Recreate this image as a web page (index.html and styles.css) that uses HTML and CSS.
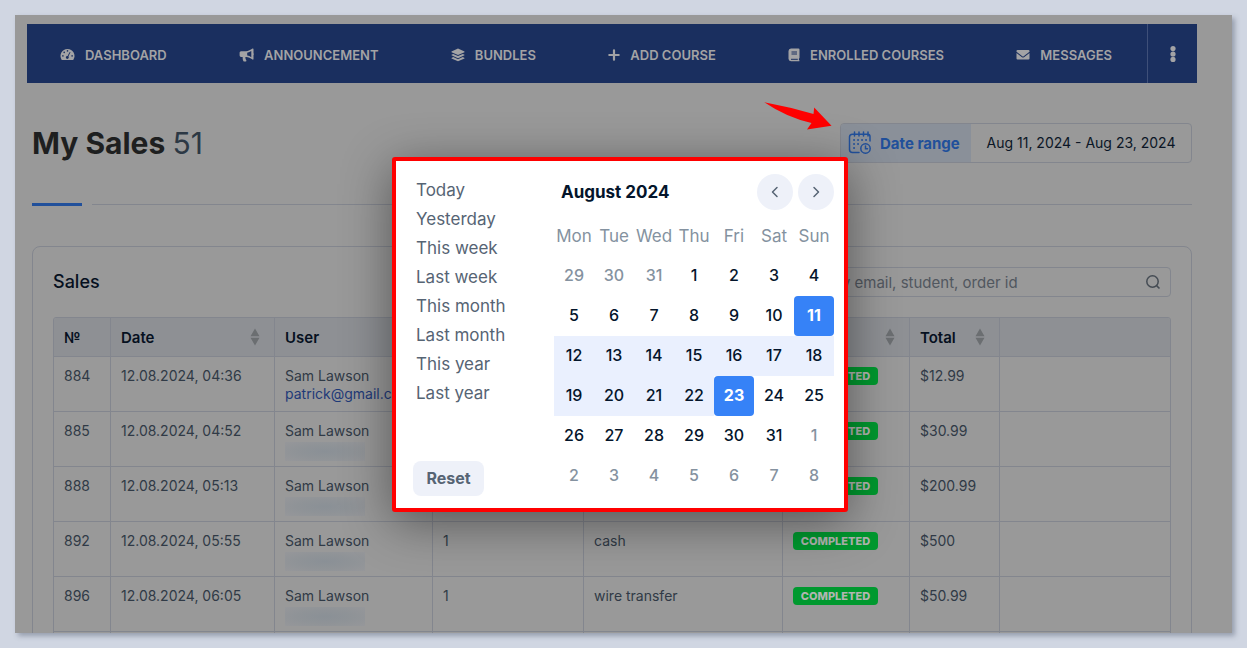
FILE: index.html
```html
<!DOCTYPE html>
<html lang="en">
<head>
<meta charset="utf-8">
<meta name="viewport" content="width=device-width, initial-scale=1">
<title>My Sales</title>
<link rel="stylesheet" href="styles.css">
</head>
<body>
<div class="frame">
  <nav class="nav">
    <div class="nav-links">
      <a href="#"><svg width="15" height="13" viewBox="0 0 15 13"><path fill="currentColor" d="M7.5 1A7 7 0 0 0 1.6 11.7q.3.4.8.4h10.2q.5 0 .8-.4A7 7 0 0 0 7.5 1z"/><g fill="#1a2f5f"><circle cx="7.5" cy="2.9" r=".8"/><circle cx="4.2" cy="4.4" r=".8"/><circle cx="2.9" cy="7.9" r=".8"/><circle cx="12.1" cy="7.9" r=".8"/><circle cx="7.3" cy="9.5" r="1.4"/></g><path d="M7.5 9.2 10 4.2" stroke="#1a2f5f" stroke-width="1"/></svg>Dashboard</a>
      <a href="#"><svg width="15" height="14" viewBox="0 0 15 14"><path fill="currentColor" d="M13.500.6q1-.3 1 .7v3.900q.8.800 0 1.700v4q0 1-1 .7C11.300 9.800 9.600 9.100 7.200 9H6.400c0 1.200.2 2.400.9 3.300q.4.900-.5 1.100H5q-.6 0-.8-.6-.7-1.800-.5-3.800H2Q.7 8.800.6 7.600V4.600Q.7 3.300 2 3.200h5C9.400 3.100 11.400 2.200 13.500.6zm-1.200 2.500Q10.400 4.400 8.200 4.700v2.900q2.300.3 4.100 1.600z"/></svg>Announcement</a>
      <a href="#"><svg width="14" height="14" viewBox="0 0 14 14"><g fill="currentColor"><path d="M7 .6 13.500 3.500v.8L7 7.100.5 4.300v-.8z"/><path d="M2.200 6 7 8.100 11.800 6l1.700.8v.5L7 10.200.5 7.300v-.5z"/><path d="M2.200 9.100 7 11.200l4.800-2.100 1.700.8v.5L7 13.300.5 10.400v-.5z"/></g></svg>Bundles</a>
      <a href="#"><svg width="12" height="12" viewBox="0 0 12 12"><path d="M6 1.300v9.400M1.300 6h9.400" stroke="currentColor" stroke-width="2.200" stroke-linecap="round"/></svg>Add course</a>
      <a href="#"><svg width="12" height="14" viewBox="0 0 12 14"><path fill="currentColor" d="M3 .5h7.500q1 0 1 1v8.300q0 .5-.5.800-.2.700 0 1.400.5.200.5.700t-.7.500H3Q.5 13 .5 10.800V3Q.6.600 3 .5z"/><path d="M3.500 4h5.500M3.500 6h5.500M3 11.300h6.800" stroke="#1a2f5f" stroke-width="1"/></svg>Enrolled courses</a>
      <a href="#"><svg width="14" height="12" viewBox="0 0 14 12"><path fill="currentColor" d="M1.500 1h11q1 0 1 1v.8L7 7.700.5 2.800V2q0-1 1-1z"/><path fill="currentColor" d="M.5 4 6 8.200q1 .7 2 0L13.500 4v5.500q0 1-1 1h-11q-1 0-1-1z"/></svg>Messages</a>
    </div>
    <button class="nav-more" aria-label="More"><svg width="6" height="18" viewBox="0 0 6 18"><g fill="currentColor"><circle cx="3" cy="3.600" r="2.600"/><circle cx="3" cy="9" r="2.600"/><circle cx="3" cy="14.400" r="2.600"/></g></svg></button>
  </nav>

  <main class="content">
    <header class="page-head">
      <h1>My Sales <span>51</span></h1>
      <div class="range">
        <button class="range-field">
          <span class="range-label"><svg width="24" height="24" viewBox="0 0 24 24" fill="none" stroke="currentColor" stroke-width="1.500" stroke-linecap="round"><path d="M22 10V5.500q0-2.300-2.300-2.300H4.500Q1.500 3.200 1.500 6v12.500q0 3 3 3h6.500M6.500 1v4M11 1v4M15.500 1v4M20 1v4"/><circle cx="17.500" cy="17.500" r="4.700"/><path d="M17.500 15v2.800h2"/><path d="M6 9h13M6 13h7M6 17h4" stroke-dasharray=".1 3.900" stroke-width="1.800"/></svg>Date range</span>
          <span class="range-value">Aug 11, 2024 - Aug 23, 2024</span>
        </button>
        <svg class="arrow" width="68" height="29" viewBox="0 0 68 29"><path fill="#f00" d="M.3.200Q26 5 49.500 12L50.200 5.500 67.500 23.700 43 27.500 47.500 21Q22 15 .3.200z"/></svg>

        <section class="picker" aria-label="Choose a date range">
          <div class="presets">
            <ul>
              <li><button>Today</button></li>
              <li><button>Yesterday</button></li>
              <li><button>This week</button></li>
              <li><button>Last week</button></li>
              <li><button>This month</button></li>
              <li><button>Last month</button></li>
              <li><button>This year</button></li>
              <li><button>Last year</button></li>
            </ul>
            <button class="reset">Reset</button>
          </div>
          <div class="calendar">
            <div class="month">
              <strong>August 2024</strong>
              <button aria-label="Previous month"><svg width="16" height="16" viewBox="0 0 16 16"><path d="M10 3.500 5.500 8 10 12.500"/></svg></button>
              <button aria-label="Next month"><svg width="16" height="16" viewBox="0 0 16 16"><path d="M6 3.500 10.500 8 6 12.500"/></svg></button>
            </div>
            <div class="weekdays"><span>Mon</span><span>Tue</span><span>Wed</span><span>Thu</span><span>Fri</span><span>Sat</span><span>Sun</span></div>
            <div class="days">
              <button class="out">29</button><button class="out">30</button><button class="out">31</button><button>1</button><button>2</button><button>3</button><button>4</button>
              <button>5</button><button>6</button><button>7</button><button>8</button><button>9</button><button>10</button><button class="end">11</button>
              <button class="in">12</button><button class="in">13</button><button class="in">14</button><button class="in">15</button><button class="in">16</button><button class="in">17</button><button class="in">18</button>
              <button class="in">19</button><button class="in">20</button><button class="in">21</button><button class="in">22</button><button class="end">23</button><button>24</button><button>25</button>
              <button>26</button><button>27</button><button>28</button><button>29</button><button>30</button><button>31</button><button class="out">1</button>
              <button class="out">2</button><button class="out">3</button><button class="out">4</button><button class="out">5</button><button class="out">6</button><button class="out">7</button><button class="out">8</button>
            </div>
          </div>
        </section>
      </div>
    </header>

    <div class="divider"></div>

    <section class="card">
      <div class="card-head">
        <h2>Sales</h2>
        <label class="search">
          <input type="text" placeholder="Search by email, student, order id" aria-label="Search sales">
          <svg width="16" height="16" viewBox="0 0 16 16" fill="none" stroke="currentColor" stroke-width="1.500"><circle cx="7.500" cy="7.500" r="5.700"/><path d="m11.600 11.600 2.900 2.900"/></svg>
        </label>
      </div>
      <div class="table-wrap">
        <table>
          <colgroup><col class="c-id"><col class="c-date"><col class="c-user"><col class="c-count"><col class="c-pay"><col class="c-status"><col class="c-total"><col></colgroup>
          <thead>
            <tr>
              <th>№</th>
              <th><div class="sortable">Date<svg width="10" height="18" viewBox="0 0 10 18"><path fill="currentColor" d="M5 .5 9.500 8.300h-9zM5 17.500.5 9.700h9z"/></svg></div></th>
              <th>User</th>
              <th></th>
              <th></th>
              <th><div class="sortable end-only"><svg width="10" height="18" viewBox="0 0 10 18"><path fill="currentColor" d="M5 .5 9.500 8.300h-9zM5 17.500.5 9.700h9z"/></svg></div></th>
              <th><div class="sortable">Total<svg width="10" height="18" viewBox="0 0 10 18"><path fill="currentColor" d="M5 .5 9.500 8.300h-9zM5 17.500.5 9.700h9z"/></svg></div></th>
              <th></th>
            </tr>
          </thead>
          <tbody>
            <tr><td>884</td><td>12.08.2024, 04:36</td><td>Sam Lawson<a href="#">patrick@gmail.com</a></td><td></td><td></td><td><span class="badge">Completed</span></td><td>$12.99</td><td></td></tr>
            <tr><td>885</td><td>12.08.2024, 04:52</td><td>Sam Lawson<span class="masked"></span></td><td></td><td></td><td><span class="badge">Completed</span></td><td>$30.99</td><td></td></tr>
            <tr><td>888</td><td>12.08.2024, 05:13</td><td>Sam Lawson<span class="masked"></span></td><td></td><td></td><td><span class="badge">Completed</span></td><td>$200.99</td><td></td></tr>
            <tr><td>892</td><td>12.08.2024, 05:55</td><td>Sam Lawson<span class="masked"></span></td><td>1</td><td>cash</td><td><span class="badge">Completed</span></td><td>$500</td><td></td></tr>
            <tr><td>896</td><td>12.08.2024, 06:05</td><td>Sam Lawson<span class="masked"></span></td><td>1</td><td>wire transfer</td><td><span class="badge">Completed</span></td><td>$50.99</td><td></td></tr>
            <tr><td></td><td></td><td></td><td></td><td></td><td></td><td></td><td></td></tr>
          </tbody>
        </table>
      </div>
    </section>
  </main>
</div>
</body>
</html>
```
FILE: styles.css
```css
* {
  box-sizing: border-box;
}

body {
  margin: 0;
  height: 100vh;
  padding: 15px;
  background: #d0d6e2;
  font-family: Inter, "Open Sans", sans-serif;
  font-size: 15px;
  color: #2a3440;
}

button {
  padding: 0;
  border: 0;
  background: none;
  font: inherit;
  color: inherit;
  cursor: pointer;
}

a {
  text-decoration: none;
}

svg {
  display: block;
  flex: none;
}

.frame {
  height: 100%;
  padding: 9px 35px 0 12px;
  overflow: hidden;
  background: #999;
  box-shadow: 3px 3px 5px rgba(80, 90, 110, 0.45);
}

/* Top navigation */
.nav {
  display: flex;
  height: 59px;
  background: #1a2f5f;
  color: #a3a3a5;
}

.nav-links {
  flex: 1;
  display: flex;
  align-items: center;
  justify-content: space-between;
  padding: 2px 35px 0 33px;
}

.nav-links a {
  display: flex;
  align-items: center;
  gap: 10px;
  color: inherit;
  font-size: 13px;
  font-weight: 600;
  text-transform: uppercase;
  white-space: nowrap;
}

.nav-more {
  display: flex;
  align-items: center;
  justify-content: center;
  width: 50px;
  border-left: 1px solid #3f5079;
}

/* Page heading */
.content {
  padding: 40px 5px 0;
}

.page-head {
  display: flex;
  align-items: center;
  justify-content: space-between;
}

h1 {
  margin: 0;
  font-size: 30px;
  line-height: 40px;
  font-weight: 700;
  color: #1e1f20;
}

h1 span {
  font-weight: 400;
  color: #2c3844;
}

.range {
  position: relative;
}

.range-field {
  display: flex;
  width: 352px;
  height: 40px;
  border: 1px solid #83868e;
  border-radius: 4px;
  overflow: hidden;
}

.range-label {
  display: flex;
  align-items: center;
  gap: 8px;
  width: 130px;
  height: 100%;
  padding-left: 7px;
  background: #8a9099;
  color: #21509b;
  font-size: 15px;
  font-weight: 700;
}

.range-value {
  flex: 1;
  font-size: 14px;
  line-height: 38px;
  text-align: center;
  color: #0b1626;
}

.arrow {
  position: absolute;
  left: -76px;
  top: -21px;
}

/* Date picker popover */
.picker {
  position: absolute;
  z-index: 2;
  top: 34px;
  right: 344px;
  display: flex;
  justify-content: space-between;
  width: 456px;
  padding: 13px 10px 12px 17px;
  border: 4px solid #f00;
  border-radius: 3px;
  background: #fff;
  box-shadow: 0 10px 50px rgba(0, 0, 0, 0.45);
  font-size: 16px;
  font-weight: 500;
}

.presets {
  display: flex;
  flex-direction: column;
  align-items: flex-start;
  justify-content: space-between;
  color: #566474;
}

.presets ul {
  margin: 0;
  padding: 2px 0 0 3px;
  list-style: none;
}

.presets li button {
  display: block;
  font-size: 17px;
  font-weight: 400;
  line-height: 29px;
}

.reset {
  width: 71px;
  height: 35px;
  padding-bottom: 2px;
  border-radius: 8px;
  background: #eef1f9;
  font-weight: 700;
}

.calendar {
  width: 280px;
}

.month {
  display: flex;
  align-items: center;
  gap: 5px;
  height: 36px;
  padding-left: 7px;
  color: #04152b;
}

.month strong {
  flex: 1;
  font-size: 17px;
  font-weight: 700;
}

.month button {
  display: grid;
  place-items: center;
  width: 36px;
  height: 36px;
  border-radius: 50%;
  background: #eef1f9;
}

.month path {
  fill: none;
  stroke: #566474;
  stroke-width: 1.500;
  stroke-linecap: round;
  stroke-linejoin: round;
}

.weekdays,
.days {
  display: grid;
  grid-template-columns: repeat(7, 1fr);
  text-align: center;
}

.weekdays {
  padding: 9px 0 3px;
  font-size: 17px;
  font-weight: 400;
  line-height: 34px;
  color: #8492a0;
}

.days {
  grid-auto-rows: 40px;
  color: #04152b;
}

.days button {
  padding-bottom: 2px;
}

.days .out {
  color: #8592a0;
}

.days .in {
  background: #eaf0fe;
}

.days .end {
  border-radius: 4px;
  background: #3682f7;
  color: #fff;
  font-weight: 700;
}

.divider {
  display: flex;
  align-items: center;
  gap: 10px;
  height: 3px;
  margin: 40px 0;
}

.divider::before {
  content: "";
  width: 50px;
  height: 3px;
  background: #21509b;
}

.divider::after {
  content: "";
  flex: 1;
  height: 1px;
  background: #83868e;
}

/* Sales card */
.card {
  padding: 20px 20px 40px;
  border: 1px solid #83868e;
  border-radius: 8px;
}

.card-head {
  display: flex;
  align-items: center;
  justify-content: space-between;
  margin-bottom: 20px;
}

h2 {
  margin: 0;
  font-size: 18px;
  line-height: 30px;
  font-weight: 500;
  color: #06101f;
}

.search {
  display: flex;
  align-items: center;
  width: 402px;
  height: 30px;
  padding: 0 9px;
  border: 1px solid #83868e;
  border-radius: 4px;
  color: #454c54;
}

.search input {
  flex: 1;
  min-width: 0;
  padding: 0;
  border: 0;
  outline: 0;
  background: none;
  font: inherit;
  font-size: 15px;
  color: inherit;
}

.search input::placeholder {
  color: #51575f;
  opacity: 1;
}

.table-wrap {
  border: 1px solid #83868e;
  border-radius: 3px;
  overflow: hidden;
}

table {
  width: 100%;
  table-layout: fixed;
  border-collapse: separate;
  border-spacing: 0;
}

.c-id { width: 57px; }
.c-date { width: 164px; }
.c-user { width: 158px; }
.c-count { width: 151px; }
.c-pay { width: 199px; }
.c-status { width: 127px; }
.c-total { width: 90px; }

th,
td {
  border-right: 1px solid #83868e;
  border-bottom: 1px solid #83868e;
  text-align: left;
  white-space: nowrap;
}

th:last-child,
td:last-child {
  border-right: 0;
}

th {
  height: 39px;
  padding: 0 14px 0 10px;
  background: #8e9094;
  font-size: 15px;
  font-weight: 600;
  color: #06101f;
}

.sortable {
  display: flex;
  align-items: center;
  justify-content: space-between;
}

.sortable.end-only {
  justify-content: flex-end;
}

.sortable svg {
  color: #6b6e71;
}

td {
  height: 55px;
  padding: 10px 0 5px 10px;
  vertical-align: top;
  font-size: 14px;
  line-height: 18px;
  color: #303a46;
}

td a {
  display: block;
  color: #1f3a78;
}

.masked {
  display: block;
  width: 80px;
  height: 19px;
  margin-top: 2px;
  background: radial-gradient(ellipse at center, #8a9096 0%, #8f9397 50%, #96979a 100%);
}

.badge {
  display: block;
  width: 85px;
  border-radius: 4px;
  background: #00992f;
  color: #b1b5b1;
  font-size: 11px;
  font-weight: 800;
  line-height: 18px;
  text-align: center;
  text-transform: uppercase;
}
```
